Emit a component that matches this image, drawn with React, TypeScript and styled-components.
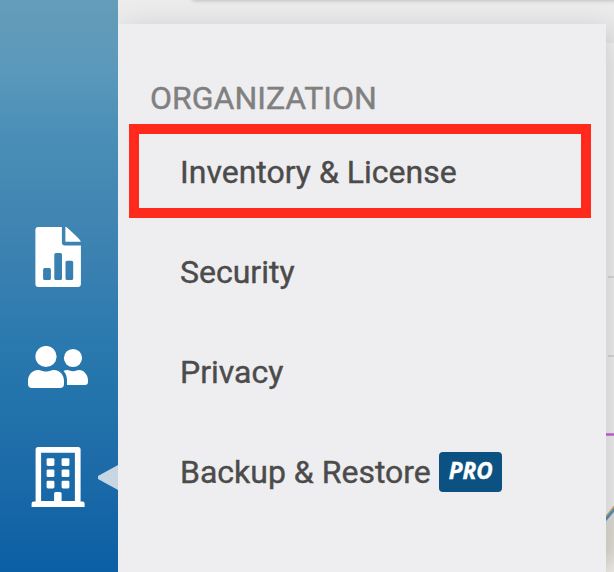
import React from "react";
import styled, { createGlobalStyle } from "styled-components";

const GlobalStyle = createGlobalStyle`
  * { box-sizing: border-box; }
  body { margin: 0; overflow: hidden; font-family: Roboto, "Liberation Sans", sans-serif; }
`;

const Shell = styled.div`
  display: grid;
  grid-template-columns: 118px 1fr;
  width: 614px;
  height: 572px;
  overflow: hidden;
`;

const Sidebar = styled.nav`
  position: relative;
  z-index: 2;
  display: flex;
  flex-direction: column;
  align-items: center;
  padding-top: 207px;
  background: linear-gradient(180deg, #659cba 0%, #5a99bb 12%, #4b8fb7 23%, #3c82b1 44%, #2878ae 62%, #1b6aa8 84%, #0b5fa5 100%);
`;

const NavItem = styled.a`
  position: relative;
  display: flex;
  justify-content: center;
  align-items: center;
  width: 100%;
  height: 100px;
  padding-right: 2px;
  color: #fff;

  & + & { height: 120px; }
  & + & + & { height: 100px; }
`;

const Pointer = styled.span`
  position: absolute;
  right: 0;
  top: 38px;
  width: 20px;
  height: 25px;
  background: #c6d6e3;
  clip-path: polygon(0 44%, 100% 0, 100% 100%, 0 56%);
`;

const Main = styled.main`
  position: relative;
  overflow: hidden;
  padding-top: 24px;
  background: #ececec;
`;

const Backdrop = styled.svg`
  position: absolute;
  inset: 0;
`;

const Menu = styled.section`
  position: relative;
  width: 488px;
  height: 548px;
  padding-top: 48px;
  background: #eeeef0;
  box-shadow: 6px 8px 30px rgba(0, 0, 0, 0.2);
`;

const MenuTitle = styled.h2`
  margin: 0;
  padding-left: 32px;
  height: 52px;
  font-size: 32px;
  font-weight: 400;
  line-height: 52px;
  color: #808080;
  -webkit-text-stroke: 0.4px #808080;
`;

const MenuItem = styled.a<{ $highlighted?: boolean }>`
  display: flex;
  align-items: center;
  width: 462px;
  height: 94px;
  margin: 0 0 6px 11px;
  padding-top: 2px;
  padding-left: ${(p) => (p.$highlighted ? 41 : 51)}px;
  border: ${(p) => (p.$highlighted ? "10px solid #ff291c" : "0")};
  font-size: 32px;
  line-height: 40px;
  color: #4b4b4b;
  -webkit-text-stroke: 0.4px #4b4b4b;
  white-space: nowrap;
`;

const ProBadge = styled.span`
  display: flex;
  align-items: center;
  justify-content: center;
  width: 63px;
  height: 40px;
  margin-left: 8px;
  padding: 0 0 2px 1px;
  border-radius: 4px;
  background: #0b5182;
  color: #fff;
  font: italic 700 22.5px/38px "Open Sans", "Noto Sans", sans-serif;
  letter-spacing: 0.1px;
  -webkit-text-stroke: 0.4px #fff;
`;

const items = [
  { label: "Inventory & License", highlighted: true },
  { label: "Security" },
  { label: "Privacy" },
  { label: "Backup & Restore", pro: true },
];

const ReportIcon = () => (
  <svg width="46" height="60" viewBox="-0.4 0 46 60" fill="currentColor">
    <path
      fillRule="evenodd"
      d="M3 0H26.5V15.5Q26.5 18.5 29.5 18.5H45.5V57Q45.5 60 42.5 60H3Q0 60 0 57V3Q0 0 3 0ZM9.3 41Q7.7 41 7.7 42.6V51.4Q7.7 53 9.3 53H13.9Q15.5 53 15.5 51.4V42.6Q15.5 41 13.9 41ZM20.5 26Q18.9 26 18.9 27.6V51.4Q18.9 53 20.5 53H25Q26.6 53 26.6 51.4V27.6Q26.6 26 25 26ZM31.7 33.7Q30.1 33.7 30.1 35.3V51.4Q30.1 53 31.7 53H36.2Q37.8 53 37.8 51.4V35.3Q37.8 33.7 36.2 33.7Z"
    />
    <path d="M30 0L31 0Q45.5 13 45.5 14.8H30Z" />
  </svg>
);

const PeopleIcon = () => (
  <svg width="60" height="42" viewBox="0 0 60 42" fill="currentColor">
    <circle cx="18" cy="10.5" r="10.6" />
    <circle cx="45" cy="12" r="9.1" />
    <path d="M10 24C13 24 14 25.5 18 25.5S23 24 26 24C32 24 36 29 36 35V38Q36 42 32 42H4Q0 42 0 38V35C0 29 4 24 10 24Z" />
    <path d="M35.5 25Q37 24 39 24C41 24 42 25.2 45 25.2S49 24 51 24C56 24 60 29 60 34V36Q60 39 57 39H39V35C39 30.5 38 27.5 35.5 25Z" />
  </svg>
);

const BuildingIcon = () => (
  <svg width="54" height="60" viewBox="-0.6 0 54 60" fill="currentColor">
    <path
      fillRule="evenodd"
      d="M6.5 0H46.5Q49 0 49 2.5V54.5H51Q53 54.5 53 56.5V60H0V56.5Q0 54.5 2 54.5H4V2.5Q4 0 6.5 0ZM9.5 5.7V54H22.5V46.5Q22.5 45 24 45H28.5Q30 45 30 46.5V54H43.3V5.7Z"
    />
    {[11.2, 22.4, 33.7].map((y) => (
      <React.Fragment key={y}>
        <rect x="15" y={y} width="7.8" height="7.7" rx="1.4" />
        <rect x="30" y={y} width="7.8" height="7.7" rx="1.4" />
      </React.Fragment>
    ))}
  </svg>
);

const PageBehind = () => (
  <Backdrop width="496" height="572" viewBox="0 0 496 572">
    <defs>
      <filter id="soft" x="-10%" y="-200%" width="120%" height="700%">
        <feGaussianBlur stdDeviation="2" />
      </filter>
      <linearGradient id="map" x1="0" y1="0" x2="0" y2="1">
        <stop offset="0" stopColor="#e6e3da" />
        <stop offset="0.65" stopColor="#e9e6dd" />
        <stop offset="1" stopColor="#f5f3ed" />
      </linearGradient>
    </defs>
    <rect x="72" y="-20" width="450" height="20.5" rx="6" fill="#b4b4b4" filter="url(#soft)" />
    <rect x="460" y="43" width="36" height="529" fill="#f7f7f7" />
    <path d="M490 277H496M490 356H496" stroke="#dedede" strokeWidth="2" />
    <path d="M488 434.5H496" stroke="#cc64dc" strokeWidth="2.5" />
    <path d="M488 519L496 508V572H488Z" fill="url(#map)" />
    <path d="M486 519.5L498 504.5" stroke="#dba856" strokeWidth="2" />
    <path d="M487 520.5L498 507.5" stroke="#4d96d0" strokeWidth="2.5" />
  </Backdrop>
);

export default function App() {
  return (
    <>
      <GlobalStyle />
      <Shell>
        <Sidebar>
          <NavItem><ReportIcon /></NavItem>
          <NavItem><PeopleIcon /></NavItem>
          <NavItem><BuildingIcon /><Pointer /></NavItem>
        </Sidebar>
        <Main>
          <PageBehind />
          <Menu>
            <MenuTitle>ORGANIZATION</MenuTitle>
            {items.map((item) => (
              <MenuItem key={item.label} $highlighted={item.highlighted}>
                {item.label}
                {item.pro && <ProBadge>PRO</ProBadge>}
              </MenuItem>
            ))}
          </Menu>
        </Main>
      </Shell>
    </>
  );
}
